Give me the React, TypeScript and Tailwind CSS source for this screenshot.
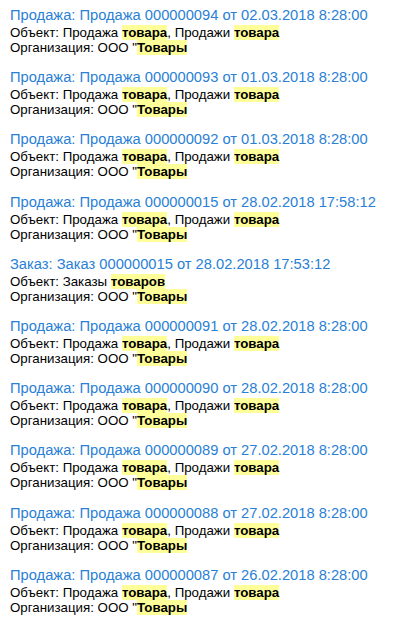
import React from "react";

type Entry = { title: string; order?: boolean };

const entries: Entry[] = [
  { title: "Продажа: Продажа 000000094 от 02.03.2018 8:28:00" },
  { title: "Продажа: Продажа 000000093 от 01.03.2018 8:28:00" },
  { title: "Продажа: Продажа 000000092 от 01.03.2018 8:28:00" },
  { title: "Продажа: Продажа 000000015 от 28.02.2018 17:58:12" },
  { title: "Заказ: Заказ 000000015 от 28.02.2018 17:53:12", order: true },
  { title: "Продажа: Продажа 000000091 от 28.02.2018 8:28:00" },
  { title: "Продажа: Продажа 000000090 от 28.02.2018 8:28:00" },
  { title: "Продажа: Продажа 000000089 от 27.02.2018 8:28:00" },
  { title: "Продажа: Продажа 000000088 от 27.02.2018 8:28:00" },
  { title: "Продажа: Продажа 000000087 от 26.02.2018 8:28:00" },
];

function Hl({ children }: { children: React.ReactNode }) {
  return <b className="bg-[#ffff99] font-bold">{children}</b>;
}

export default function App() {
  return (
    <div className="min-h-screen bg-white font-['Liberation_Sans',Arial,sans-serif] pl-[10px] pt-[6px]">
      <div className="flex flex-col gap-[13.2px]">
        {entries.map((e, i) => (
          <div key={i}>
            <a className="block text-[14.7px] leading-[19px] text-[#2a7fd6] cursor-pointer whitespace-nowrap">
              {e.title}
            </a>
            <div className="text-[13.3px] leading-[15px] text-black whitespace-nowrap">
              {e.order ? (
                <>
                  Объект: Заказы <Hl>товаров</Hl>
                </>
              ) : (
                <>
                  Объект: Продажа <Hl>товара</Hl>, Продажи <Hl>товара</Hl>
                </>
              )}
            </div>
            <div className="text-[13.3px] leading-[15px] text-black whitespace-nowrap">
              Организация: ООО "<Hl>Товары</Hl>
            </div>
          </div>
        ))}
      </div>
    </div>
  );
}
